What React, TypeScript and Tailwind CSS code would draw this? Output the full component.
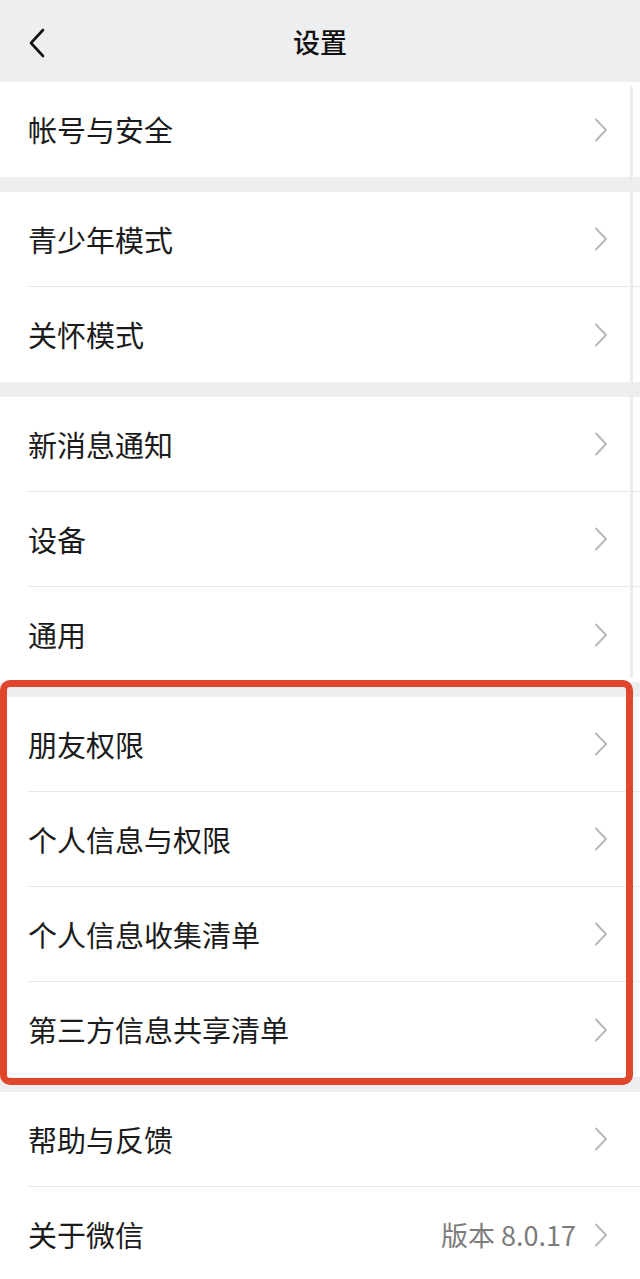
import React from "react";

const font = {
  fontFamily: '"Noto Sans CJK SC", "Noto Sans", sans-serif',
};

type Item = { label: string; value?: string };

const groups: Item[][] = [
  [{ label: "帐号与安全" }],
  [{ label: "青少年模式" }, { label: "关怀模式" }],
  [{ label: "新消息通知" }, { label: "设备" }, { label: "通用" }],
  [
    { label: "朋友权限" },
    { label: "个人信息与权限" },
    { label: "个人信息收集清单" },
    { label: "第三方信息共享清单" },
  ],
  [{ label: "帮助与反馈" }, { label: "关于微信", value: "版本 8.0.17" }],
];

const Chevron = () => (
  <svg width="14" height="24" viewBox="0 0 14 24" fill="none" className="shrink-0">
    <path d="M2 1.5 L12 12 L2 22.5" stroke="#b8b8b8" strokeWidth="1.9" strokeLinecap="round" strokeLinejoin="round" />
  </svg>
);

const Row = ({ item, last }: { item: Item; last: boolean }) => (
  <div className="pl-[28px] bg-white">
    <div
      className={`h-[95px] pr-[32px] flex items-center justify-between ${
        last ? "" : "border-b border-[#e8e8e8]"
      }`}
    >
      <span className="text-[29px] text-[#1b1b1b] leading-none">{item.label}</span>
      <div className="flex items-center gap-[18px]">
        {item.value && <span className="text-[27px] text-[#7c7c7c] leading-none">{item.value}</span>}
        <Chevron />
      </div>
    </div>
  </div>
);

export default function App() {
  return (
    <div className="relative w-[640px] h-[1279px] overflow-hidden bg-[#eceef0]" style={font}>
      {/* Header */}
      <header className="h-[82px] relative flex items-center justify-center">
        <svg
          width="20"
          height="30"
          viewBox="0 0 20 30"
          fill="none"
          className="absolute left-[27px] top-[28px]"
        >
          <path d="M16 2 L4 15 L16 28" stroke="#111" strokeWidth="2.6" strokeLinecap="round" strokeLinejoin="round" />
        </svg>
        <h1 className="text-[27px] font-medium text-[#111] leading-none">设置</h1>
      </header>

      {/* Groups */}
      <div className="flex flex-col gap-[15px]">
        {groups.map((g, gi) => (
          <section key={gi} className="bg-white">
            {g.map((item, i) => (
              <Row key={item.label} item={item} last={i === g.length - 1} />
            ))}
          </section>
        ))}
      </div>

      {/* scroll indicator */}
      <div className="absolute right-[7px] top-[86px] w-[3px] h-[592px] bg-[#ececec] rounded-full" />

      {/* red annotation box */}
      <div className="absolute left-0 top-[680px] w-[633px] h-[405px] border-[7px] border-[#e0462b] rounded-[10px]" />
    </div>
  );
}
